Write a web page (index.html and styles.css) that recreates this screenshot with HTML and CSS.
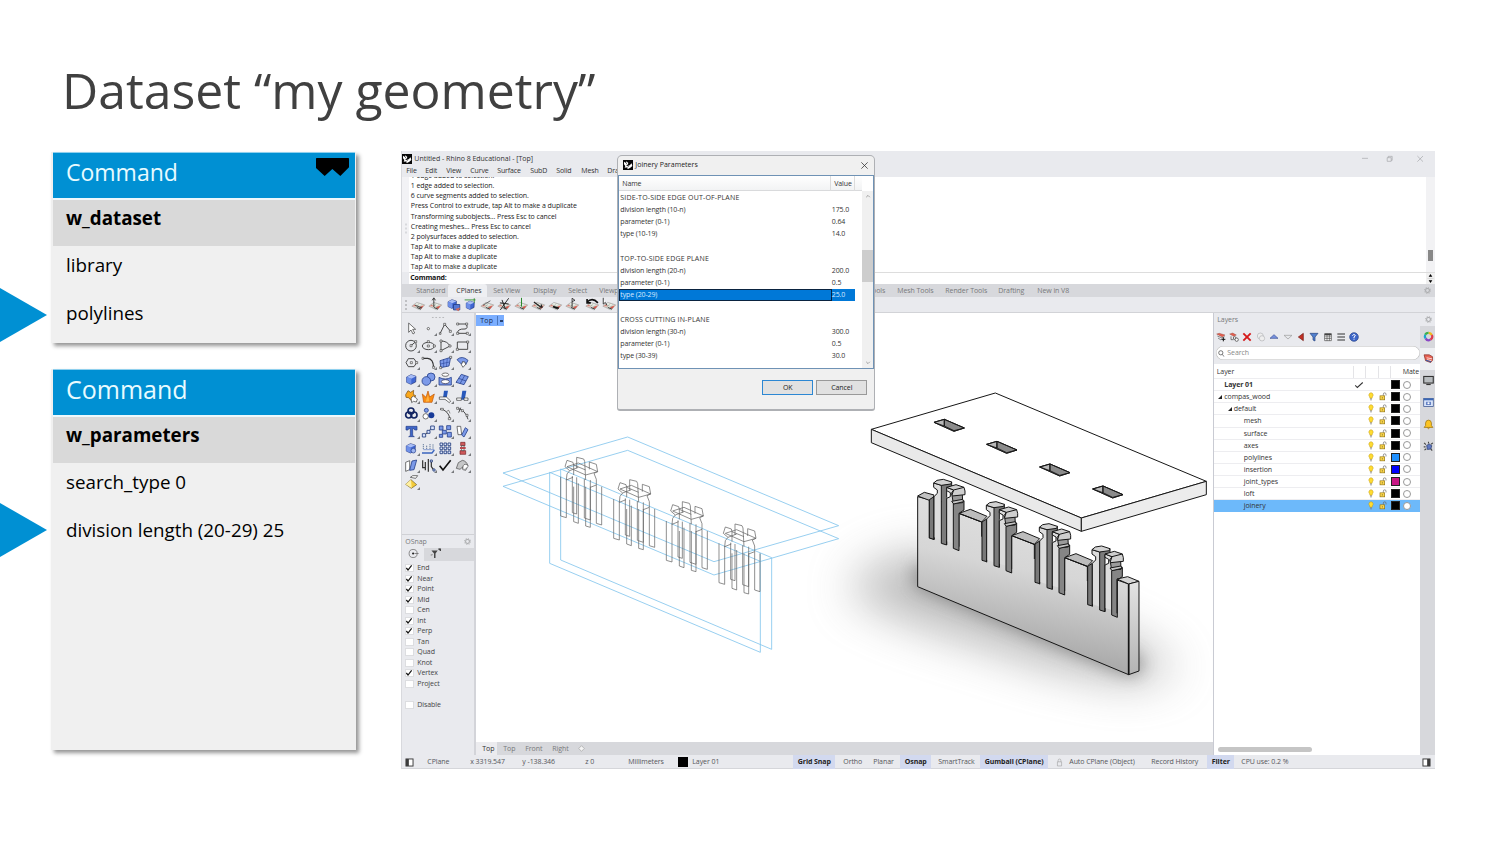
FILE: index.html
```html
<!DOCTYPE html>
<html lang="en">
<head>
<meta charset="utf-8">
<title>Dataset “my geometry”</title>
<link rel="stylesheet" href="styles.css">
</head>
<body>
<svg class="defs" width="0" height="0">
  <defs>
    <symbol id="logo" viewBox="0 0 30 30"><rect width="30" height="30" fill="#080808"/><path d="M3 5 9 9 10 4 16 9 14 14 9 15 13 18 20 16 26 10 28 18 22 23 15 27 10 22 5 24 7 18 3 13Z" fill="#fff"/><path d="M9 9l3 2M17 19l-4 3" stroke="#000" stroke-width="2"/></symbol>
    <symbol id="gear" viewBox="0 0 20 20"><circle cx="10" cy="10" r="5.5" fill="none" stroke="#aaabad" stroke-width="3"/><circle cx="10" cy="10" r="8" fill="none" stroke="#aaabad" stroke-width="3" stroke-dasharray="3 3.3"/></symbol>
    <symbol id="bulb" viewBox="0 0 18 26"><path d="M9 2a7 7 0 0 0-4 12l1 4h6l1-4A7 7 0 0 0 9 2Z" fill="#ffdc32" stroke="#c39a12" stroke-width="1.5"/><path d="M6 20h6M7 23h4" stroke="#777" stroke-width="2"/></symbol>
    <symbol id="lock" viewBox="0 0 24 26"><path d="M13 11V6a4 4 0 0 1 8 0v4" fill="none" stroke="#666" stroke-width="2"/><rect x="3" y="11" width="14" height="12" fill="#ffd84a" stroke="#8f7213" stroke-width="2"/><path d="M10 15v4" stroke="#553" stroke-width="2"/></symbol>
    <symbol id="tick" viewBox="0 0 24 24"><path d="M4 12l5 6L20 4" fill="none" stroke="#151515" stroke-width="3.6"/></symbol>
    <symbol id="plane" viewBox="0 0 36 36"><path d="M2 22 14 13l19 6-11 12Z" fill="#e9ece6" stroke="#9b9b98" stroke-width="1.5"/><path d="M8 18l19 7M20 15 11 26M27 17 17 29" stroke="#8b9a88" stroke-width="1"/><path d="M19 25l12-6-6 9Z" fill="#d4574c"/><path d="M3 22l11 1-5-5Z" fill="#d98378"/><path d="M14 25l10 4" stroke="#222" stroke-width="2"/></symbol>
    <symbol id="cube" viewBox="0 0 36 36"><path d="M4 11 17 4l15 5-1 17-14 7L4 27Z" fill="#3f66d2" stroke="#1d2f73" stroke-width="2"/><path d="M4 11 17 4l15 5-14 7Z" fill="#a9bdf5"/><path d="M18 16v17L4 27V11Z" fill="#6f90e8"/></symbol>
    <symbol id="side" viewBox="0 0 28 28"><rect x="3" y="3" width="22" height="22" fill="#fff" stroke="#3c3c3c" stroke-width="3"/><path d="M3 3h9v22H3z" fill="#3c3c3c"/></symbol>
  </defs>
</svg>

<main class="slide">
  <h1 class="title">Dataset “my geometry”</h1>
  <div class="columns">
    <div class="cards">
      <section class="card">
        <header class="card-head"><span class="cmd-a">Command</span>
          <svg class="wood" viewBox="0 0 99 54"><path d="M2 0H97Q99 0 99 2V28L73 54 49 33 26 54 0 30V2Q0 0 2 0Z"/></svg>
        </header>
        <div class="card-name"><span>w_dataset</span></div>
        <div class="card-row">library</div>
        <div class="card-row pointed">polylines</div>
      </section>
      <section class="card tall">
        <header class="card-head"><span class="cmd-b">Command</span></header>
        <div class="card-name"><span>w_parameters</span></div>
        <div class="card-row">search_type 0</div>
        <div class="card-row pointed">division length (20-29) 25</div>
      </section>
    </div>

    <div class="app">
      <header class="app-top">
        <div class="app-title"><svg><use href="#logo"/></svg><span>Untitled - Rhino 8 Educational - [Top]</span>
          <svg class="winbtns" viewBox="0 0 190 30"><path d="M3 13h18M79 11h12v11H79zM82 11V7h12v12h-3M170 6l17 17M187 6l-17 17" fill="none" stroke="#9c9da0" stroke-width="1.8"/></svg>
        </div>
        <nav class="menu"><span>File</span><span>Edit</span><span>View</span><span>Curve</span><span>Surface</span><span>SubD</span><span>Solid</span><span>Mesh</span><span>Dra</span></nav>
      </header>
      <section class="history">
        <i class="grip-v"></i>
        <div class="log">
          <p>1 edge added to selection.</p><p>1 edge added to selection.</p><p>6 curve segments added to selection.</p><p>Press Control to extrude, tap Alt to make a duplicate</p><p>Transforming subobjects... Press Esc to cancel</p><p>Creating meshes... Press Esc to cancel</p><p>2 polysurfaces added to selection.</p><p>Tap Alt to make a duplicate</p><p>Tap Alt to make a duplicate</p><p>Tap Alt to make a duplicate</p>
        </div>
        <div class="log-scroll"><i></i></div>
      </section>
      <div class="prompt"><b>Command:</b><svg viewBox="0 0 24 36"><path d="M12 3 18 12H6ZM12 33 18 24H6Z"/><path d="M2 18h20" stroke="#aaa"/></svg></div>
      <nav class="tabs"><i></i><span>Standard</span><span class="on">CPlanes</span><span>Set View</span><span>Display</span><span>Select</span><span>Viewport</span><span>Tools</span><span>Mesh Tools</span><span>Render Tools</span><span>Drafting</span><span>New in V8</span><svg><use href="#gear"/></svg></nav>
      <div class="toolbar">
        <i class="grip-v"></i>
        <svg viewBox="0 0 36 36"><use href="#plane"/><path d="M10 20l16 6" stroke="#333" stroke-width="2"/></svg>
        <svg viewBox="0 0 36 36"><use href="#plane"/><path d="M14 24V3M10 8l4-6 4 6" stroke="#222" stroke-width="2" fill="none"/></svg>
        <svg viewBox="0 0 36 36"><use href="#cube" x="2" y="3" width="26" height="27"/><path d="M18 18h15v13H18z" fill="#5577d4" stroke="#233d88" stroke-width="2"/><path d="M22 29l12-4-4 9Z" fill="#cf6a5c"/></svg>
        <svg viewBox="0 0 36 36"><use href="#cube" x="5" y="7" width="25" height="25"/><path d="M4 7h26M27 3v11" stroke="#282" stroke-width="2"/></svg>
        <svg viewBox="0 0 36 36"><use href="#plane"/><path d="M7 20 25 9" stroke="#555" stroke-width="2"/></svg>
        <svg viewBox="0 0 36 36"><use href="#plane"/><path d="M8 31 28 3M12 7l8 22M7 14l21 3" stroke="#222" stroke-width="2.3"/></svg>
        <svg viewBox="0 0 36 36"><use href="#plane"/><path d="M18 23V2" stroke="#2a8a2d" stroke-width="2.5"/></svg>
        <svg viewBox="0 0 36 36"><use href="#plane"/><path d="M7 12l18 13M24 18l3 8" stroke="#222" stroke-width="3"/></svg>
        <svg viewBox="0 0 36 36"><use href="#plane"/><path d="M12 23l14 4" stroke="#111" stroke-width="4"/></svg>
        <svg viewBox="0 0 36 36"><use href="#plane"/><path d="M17 25V3l7 5-7 3" stroke="#222" stroke-width="2" fill="none"/></svg>
        <svg class="wide" viewBox="0 0 36 36"><use href="#plane"/><path d="M5 12Q18 0 31 14M5 5v9h9" stroke="#111" stroke-width="4" fill="none"/></svg>
        <svg viewBox="0 0 36 36"><use href="#plane"/><path d="M3 2v15l5-4 4 7" stroke="#222" stroke-width="2" fill="#fff"/></svg>
      </div>

      <div class="work">
        <aside class="side">
          <div class="palette">
            <i class="grip-h"></i>
            <div class="tools">
              <b><svg viewBox="0 0 51 51"><path d="M17 9v28l7-7 6 12 5-3-6-11h9Z" fill="#fff" stroke="#333" stroke-width="2"/></svg></b>
              <b><svg viewBox="0 0 51 51"><circle cx="25" cy="26" r="3.5" fill="#fff" stroke="#333" stroke-width="2"/></svg></b>
              <b><svg viewBox="0 0 51 51"><path d="M9 41 23 13l17 20" class="ln"/><path d="M7 38h5v5H7zM20 10h6v6h-6zM37 31h6v6h-6z" class="nd"/></svg></b>
              <b><svg viewBox="0 0 51 51"><path d="M11 12h26Q43 26 33 27 9 26 11 40h28" class="ln"/><path d="M8 9h6v6H8zM35 9h6v6h-6zM8 37h6v6H8zM37 37h6v6h-6z" class="nd"/></svg></b>
              <b><svg viewBox="0 0 51 51"><circle cx="24" cy="26" r="16" class="ln"/><path d="M24 26 37 15" class="ln"/><path d="M21 23h6v6h-6zM35 11h6v6h-6z" class="nd"/></svg></b>
              <b><svg viewBox="0 0 51 51"><ellipse cx="25" cy="27" rx="18" ry="11" class="ln"/><path d="M22 24h6v6h-6zM22 11h6v6h-6zM40 24h6v6h-6z" class="nd"/></svg></b>
              <b><svg viewBox="0 0 51 51"><path d="M12 12v30M12 12Q31 12 39 27L12 41" class="ln"/><path d="M9 9h6v6H9zM36 24h6v6h-6zM9 38h6v6H9z" class="nd"/></svg></b>
              <b><svg viewBox="0 0 51 51"><path d="M10 15h31v22H10Z" class="ln"/><path d="M7 34h6v6H7zM38 12h6v6h-6z" class="nd"/></svg></b>
              <b><svg viewBox="0 0 51 51"><path d="M9 26 16 14h17l8 12-8 12H16Z" class="ln"/><path d="M22 23h6v6h-6zM38 23h6v6h-6z" class="nd"/></svg></b>
              <b><svg viewBox="0 0 51 51"><path d="M8 13h15Q40 14 41 41" class="ln thick"/><path d="M6 10h5v6H6zM38 37h6v6h-6z" class="nd"/></svg></b>
              <b><svg viewBox="0 0 51 51"><path d="M9 20 41 10 36 36 11 41Z" class="bl"/><path d="M20 15v24M31 14l-3 24M10 30l28-6" stroke="#203b91" stroke-width="1.5"/><path d="M38 7h6v6h-6zM8 38h6v6H8z" class="nd"/></svg></b>
              <b><svg viewBox="0 0 51 51"><path d="M9 17Q24 3 42 19L35 32Q34 22 26 23L24 32Z" class="bl"/><path d="M26 23Q34 21 35 31l-8 9-5-8Z" fill="#fff" stroke="#333" stroke-width="2"/></svg></b>
              <b><svg viewBox="0 0 51 51"><use href="#cube" x="7" y="7" width="36" height="36"/></svg></b>
              <b><svg viewBox="0 0 51 51"><circle cx="33" cy="18" r="12" class="bl"/><circle cx="19" cy="30" r="13" class="bl"/></svg></b>
              <b><svg viewBox="0 0 51 51"><ellipse cx="25" cy="11" rx="10" ry="5" fill="#fff" stroke="#333" stroke-width="2"/><path d="M6 19v23h37V19Q25 29 6 19Z" class="bl"/><ellipse cx="25" cy="32" rx="12" ry="6" fill="#fff" stroke="#224" stroke-width="2"/></svg></b>
              <b><svg viewBox="0 0 51 51"><path d="M6 34 22 10l21 7-13 24Z" class="bl"/><path d="M14 22l22 8M32 14 18 38" stroke="#233d88" stroke-width="2"/></svg></b>
              <b><svg viewBox="0 0 51 51"><path d="M8 20 15 8l8 5 9-6-1 12 8 5-10 5-5 8-7-8-8-1Z" fill="#fba81c" stroke="#704713" stroke-width="2"/><path d="M24 30l7-6 12 9-3 9-9-2-5 4Z" fill="#fff" stroke="#333" stroke-width="2"/></svg></b>
              <b><svg viewBox="0 0 51 51"><path d="M11 43 7 18l11 10L24 9l5 18 14-9-7 25Z" fill="#f98d13" stroke="#bd5308" stroke-width="2"/><path d="M17 41 24 20l4 20Z" fill="#ffb341"/></svg></b>
              <b><svg viewBox="0 0 51 51"><path d="M21 8h12l-4 22H18Z" fill="#2858bb"/><path d="M7 27h21l13 12-4 5-13-10H7Z" fill="#fff" stroke="#333" stroke-width="2"/></svg></b>
              <b><svg viewBox="0 0 51 51"><path d="M25 8h12l-5 27H21Z" fill="#2858bb"/><path d="M8 30h14v7H8zM30 30h12v7H30z" fill="#fff" stroke="#333" stroke-width="2"/></svg></b>
              <b><svg viewBox="0 0 51 51"><g fill="none" stroke="#132563" stroke-width="5"><circle cx="24" cy="18" r="9"/><circle cx="17" cy="30" r="9"/><circle cx="33" cy="30" r="9"/></g></svg></b>
              <b><svg viewBox="0 0 51 51"><circle cx="19" cy="16" r="6" class="bl"/><circle cx="17" cy="34" r="8" fill="#fff" stroke="#333" stroke-width="2"/><circle cx="34" cy="31" r="9" fill="#173a98"/></svg></b>
              <b><svg viewBox="0 0 51 51"><path d="M9 12Q34 15 39 42" class="ln"/><path d="M11 10h8v5h-8zM28 20l7-4 4 9M34 38h7v6h-7z" class="nd"/></svg></b>
              <b><svg viewBox="0 0 51 51"><path d="M8 9Q35 15 42 43M20 8l-6 15" class="ln"/><path d="M8 7h6v6H8zM22 14h6v6h-6zM36 28h6v6h-6z" class="nd"/></svg></b>
              <b><svg viewBox="0 0 51 51"><path d="M9 10h33v11h-7l-2-4h-4v21l5 3H17l5-3V17h-5l-2 4H9Z" fill="#3f66c8" stroke="#233d88" stroke-width="2"/></svg></b>
              <b><svg viewBox="0 0 51 51"><path d="M13 38 36 14" class="ln"/><path d="M7 32h10v10H7zM32 9h11v11H32zM21 22h9v9h-9z" class="nb"/></svg></b>
              <b><svg viewBox="0 0 51 51"><path d="M7 9h11v12H7zM29 8h12v12H29zM16 22h12v11H16zM31 28h12v14H31zM7 34h10v9H7z" class="bl"/></svg></b>
              <b><svg viewBox="0 0 51 51"><path d="M9 10h11l3 25H12Z" fill="#fff" stroke="#333" stroke-width="2"/><path d="M23 36 34 14l8 6-12 22Z" class="bl"/></svg></b>
              <b><svg viewBox="0 0 51 51"><use href="#cube" x="6" y="7" width="35" height="35"/><circle cx="31" cy="32" r="7" fill="#9fb6f1" stroke="#233d88" stroke-width="2"/></svg></b>
              <b><svg viewBox="0 0 51 51"><path d="M6 39h30l7-9" fill="none" stroke="#3b66bf" stroke-width="4"/><path d="M10 27V12M20 27V15M30 27V12M39 26V12" stroke="#667c9d" stroke-width="3" stroke-dasharray="4 2"/><path d="M10 29h33" stroke="#5c79c4" stroke-width="2"/></svg></b>
              <b><svg viewBox="0 0 51 51"><path d="M9 9h8v8H9zM21 9h8v8h-8zM33 9h8v8h-8zM9 21h8v8H9zM21 21h8v8h-8zM33 21h8v8h-8zM9 33h8v8H9zM21 33h8v8h-8zM33 33h8v8h-8z" class="nb"/></svg></b>
              <b><svg viewBox="0 0 51 51"><path d="M20 7h13v10H20zM18 32h17v11H18z" fill="#cf595b" stroke="#772325" stroke-width="2"/><path d="M23 17h7v15h-7z" fill="#fff" stroke="#333" stroke-width="2"/><path d="M18 21h17v6H18z" fill="#b9494d"/></svg></b>
              <b><svg viewBox="0 0 51 51"><path d="M8 16 20 11v27L8 43Z" fill="#fff" stroke="#333" stroke-width="2"/><path d="M20 40 27 12l14-3-8 29Z" class="bl"/></svg></b>
              <b><svg viewBox="0 0 51 51"><path d="M8 10v22h9M25 6v38M16 15v25M34 12v17l8 11" class="ln thick"/><path d="M31 9h6v6h-6zM39 36h6v6h-6z" class="nb"/></svg></b>
              <b><svg viewBox="0 0 51 51"><path d="M8 26l10 13L41 10" fill="none" stroke="#111" stroke-width="5"/></svg></b>
              <b><svg viewBox="0 0 51 51"><path d="M7 34 13 17 25 10Q38 12 42 27L35 40 27 38 26 30 18 37Z" fill="#c6c7c8" stroke="#444" stroke-width="2"/><path d="M27 38Q25 22 34 22T42 28" fill="#fff" stroke="#444" stroke-width="2"/></svg></b>
              <b><svg viewBox="0 0 51 51"><path d="M8 31 24 17l17 15-16 11Z" fill="#f4cb3a" stroke="#6d5c23" stroke-width="2"/><path d="M24 17l2 25-18-11Z" fill="#fff0a1"/><path d="M22 10 29 5h15l-6 8Z" fill="#fff" stroke="#333" stroke-width="2"/></svg></b>
            </div>
          </div>
          <div class="osnap">
            <div class="panel-head"><span>OSnap</span><svg><use href="#gear"/></svg></div>
            <div class="osnap-tabs">
              <span><svg viewBox="0 0 30 30"><circle cx="14" cy="15" r="11" fill="none" stroke="#666" stroke-width="2"/><circle cx="14" cy="15" r="3" fill="#222"/><path d="M18 15h11" stroke="#666" stroke-width="2"/></svg></span>
              <span><svg viewBox="0 0 30 30"><path d="M4 7h17l-6 8v12h-4V15Z" fill="#444"/><path d="M23 3h5v5" fill="none" stroke="#222" stroke-width="3"/><path d="M2 20l5-2" stroke="#888" stroke-width="3"/></svg></span>
            </div>
            <ul class="checks">
              <li><i><svg><use href="#tick"/></svg></i>End</li><li><i><svg><use href="#tick"/></svg></i>Near</li><li><i><svg><use href="#tick"/></svg></i>Point</li><li><i><svg><use href="#tick"/></svg></i>Mid</li><li><i></i>Cen</li><li><i><svg><use href="#tick"/></svg></i>Int</li><li><i><svg><use href="#tick"/></svg></i>Perp</li><li><i></i>Tan</li><li><i></i>Quad</li><li><i></i>Knot</li><li><i><svg><use href="#tick"/></svg></i>Vertex</li><li><i></i>Project</li><li class="last"><i></i>Disable</li>
            </ul>
          </div>
        </aside>

        <section class="view">
          <div class="stage">
            <svg class="scene" viewBox="475 313 737 428">
              <defs>
                <linearGradient id="front" gradientUnits="userSpaceOnUse" x1="520" y1="420" x2="440" y2="790"><stop offset="0" stop-color="#dedede"/><stop offset=".4" stop-color="#d6d6d6"/><stop offset="1" stop-color="#ababab"/></linearGradient>
                <linearGradient id="end" x1="0" y1="0" x2="0" y2="1"><stop offset="0" stop-color="#e4e4e4"/><stop offset="1" stop-color="#b2b2b2"/></linearGradient>
                <filter id="soft" x="-50%" y="-50%" width="200%" height="200%"><feGaussianBlur stdDeviation="70"/></filter>
                <filter id="mid" x="-50%" y="-50%" width="200%" height="200%"><feGaussianBlur stdDeviation="26"/></filter>
                <g id="wire"><path d="M209 170V288L226 293V178M244 168V278L257 282V172M248 200V305L262 310V190M280 176V294L298 300V180M284 200V318L298 322V200M316 195V310L332 315V200M222 140 228 121 246 127 248 135V165M222 140 236 152 228 162 226 180 246 172M257 145V112L278 117 281 124 284 180M295 148V126L316 133 320 155 309 160 316 178V195L298 202M228 140 262 129 320 155 284 165ZM248 135 284 150M236 152 262 142"/></g>
                <g id="hole"><path d="M219 127 250 118 310 144 279 154Z" fill="#999"/><path d="M219 127 250 118V138Z" fill="#b9b9b9"/><path d="M250 118V138L279 152 310 144Z" fill="#8b8b8b"/><path d="M219 127 250 118 310 144 279 154ZM250 118V138" fill="none"/></g>
                <g id="joint">
                  <path d="M205 359 219 350V478L205 474Z" fill="#787878"/>
                  <path d="M219 345 229 340V330L218 322V309L241 316V480L219 472Z" fill="#dcdcdc" stroke="none"/>
                  <path d="M219 480V350L229 340V330L218 322V309L241 316" fill="none"/>
                  <path d="M241 316 272 306V320L257 325V495L241 490Z" fill="#7b7b7b"/>
                  <path d="M218 309 228 301 247 298 272 306 270 312 241 316Z" fill="#d2d2d2"/>
                  <path d="M257 322 278 330V490L257 484V352L268 350V338L257 332Z" fill="#dcdcdc" stroke="none"/>
                  <path d="M257 495V355L268 350V338L257 332V322L278 330" fill="none"/>
                  <path d="M277 372 309 362V390L294 400V512L277 505Z" fill="#858585"/>
                  <path d="M273 346 304 343 305 368 277 370Z" fill="#9b9b9b"/>
                  <path d="M272 364 305 358 308 365 278 372Z" fill="#c5c5c5"/>
                  <path d="M257 322 285 314 309 322 312 333V344L274 348 271 340 278 330Z" fill="#cfcfcf"/>
                  <path d="M278 330 309 322M273 345 278 330" fill="none"/>
                </g>
                <g id="block"><path d="M294 400 328 388 378 409 362 426Z" fill="#bcbcbc"/><path d="M294 500V400L362 426V470" fill="none"/></g>
              </defs>
              <g transform="translate(490 420) scale(.33333)" fill="none">
                <g stroke="#83c5ed" stroke-width="2.5"><path d="M36 159 410 51 1043 317 669 425ZM36 199 410 91 1043 356 669 465ZM176 157 808 424V697L176 430ZM209 147 842 413V688L209 420ZM808 400V424"/></g>
                <g stroke="#666" stroke-width="2.2"><use href="#wire"/><use href="#wire" x="159" y="67"/><use href="#wire" x="317" y="133"/><use href="#wire" x="475" y="200"/></g>
              </g>
              <g transform="translate(860 380) scale(.33333)" stroke="#151515" stroke-width="3" stroke-linejoin="round">
                <path d="M20 560 190 510 820 780 960 870 800 910 560 860 130 720 -40 640Z" fill="#777" opacity=".5" stroke="none" filter="url(#soft)"/>
                <path d="M160 550 820 820 850 850 830 885 790 882 160 618Z" fill="#555" opacity=".55" stroke="none" filter="url(#mid)"/>
                <path d="M170 350 205 359V474L219 478V350L294 400 362 426 453 466 520 493 612 533 680 560 768 600 803 612V884L170 620Z" fill="url(#front)"/>
                <path d="M170 348 190 337 219 345 217 354 205 361Z" fill="#c2c2c2"/>
                <use href="#block"/><use href="#block" x="158" y="67"/><use href="#block" x="317" y="133"/>
                <use href="#joint"/><use href="#joint" x="158" y="67"/><use href="#joint" x="317" y="133"/><use href="#joint" x="475" y="200"/>
                <path d="M768 700V597" fill="none"/>
                <path d="M768 597 800 590 834 604 803 612Z" fill="#d5d5d5"/>
                <path d="M803 612 834 604V873L803 884Z" fill="url(#end)"/>
                <path d="M803 612V884" stroke-width="5"/>
                <path d="M31 148 403 39 1036 304 661 414Z" fill="#fff"/>
                <path d="M31 148 661 414V454L31 188Z" fill="#e9e9e9"/>
                <path d="M661 414 1036 304V344L661 454Z" fill="#ececec"/>
                <g stroke-width="2.5"><use href="#hole"/><use href="#hole" x="158" y="66"/><use href="#hole" x="317" y="134"/><use href="#hole" x="476" y="200"/></g>
              </g>
            </svg>
            <div class="view-label"><span>Top</span><i></i></div>
          </div>
          <nav class="view-tabs"><span class="on">Top</span><span>Top</span><span>Front</span><span>Right</span><svg viewBox="0 0 20 20"><path d="M10 2 18 10 10 18 2 10Z" fill="#f5f5f5" stroke="#a5a5a5" stroke-width="2"/></svg></nav>
        </section>

        <section class="layers">
          <div class="panel-head"><span>Layers</span><svg><use href="#gear"/></svg></div>
          <div class="layers-body">
            <div class="layers-main">
              <div class="layer-tools">
                <svg viewBox="0 0 30 30"><path d="M2 6l8-2 17 5-8 6Z" fill="#e5604f" stroke="#792d25"/><path d="M4 12l14 6 8-4M6 18l9 6" stroke="#555" stroke-width="2" fill="none"/><path d="M22 16v12M16 22h12" stroke="#111" stroke-width="3"/></svg>
                <svg viewBox="0 0 30 30"><path d="M2 6l9-3 11 6-8 4Z" fill="#e5604f" stroke="#792d25"/><path d="M6 13v10h8" stroke="#444" stroke-width="2" fill="none"/><circle cx="17" cy="18" r="4" class="ring"/><circle cx="23" cy="23" r="5" class="ring"/></svg>
                <svg viewBox="0 0 30 30"><path d="M4 4l22 22M26 4 4 26" stroke="#d51919" stroke-width="5.5"/></svg>
                <svg viewBox="0 0 30 30"><g fill="#eee" stroke="#b2b4b6" stroke-width="2"><circle cx="13" cy="12" r="9"/><circle cx="18" cy="19" r="8"/></g></svg>
                <svg viewBox="0 0 30 30"><path d="M3 19 15 8l12 11Z" fill="#7893df" stroke="#3a4e95" stroke-width="2"/></svg>
                <svg viewBox="0 0 30 30"><path d="M3 10 15 21 27 10Z" fill="#e6e8eb" stroke="#999" stroke-width="2"/></svg>
                <svg viewBox="0 0 30 30"><path d="M22 4v22L7 15Z" fill="#c33125" stroke="#6c1914" stroke-width="2"/></svg>
                <svg viewBox="0 0 30 30"><path d="M3 4h24l-9 11v12l-6-3v-9Z" fill="#5180ce" stroke="#23417e" stroke-width="2"/></svg>
                <svg viewBox="0 0 30 30"><path d="M5 5h20v21H5zM5 12h20M5 19h20M12 5v21M19 5v21" fill="#fff" stroke="#444" stroke-width="2"/><path d="M5 5h20v4H5z" fill="#444"/></svg>
                <svg viewBox="0 0 30 30"><path d="M4 6h23M4 15h23M4 24h23" stroke="#333" stroke-width="3.5"/></svg>
                <svg viewBox="0 0 30 30"><circle cx="15" cy="15" r="13" fill="#3e67c9" stroke="#223f83" stroke-width="2"/><path d="M10 11q5-7 9-1 0 3-4 5v3m0 2v3" fill="none" stroke="#fff" stroke-width="3"/></svg>
              </div>
              <div class="search"><svg viewBox="0 0 20 20"><circle cx="8" cy="8" r="6" fill="none" stroke="#444" stroke-width="2"/><path d="M12 13l6 6" stroke="#444" stroke-width="2"/></svg>Search</div>
              <div class="lr head"><span>Layer</span><i></i><i></i><i></i><i></i><span class="mat">Mate</span></div>
              <div class="rows">
                <div class="lr"><span class="n0">Layer 01</span><svg class="ck" viewBox="0 0 24 24"><path d="M3 13l5 5L21 6" fill="none" stroke="#333" stroke-width="2.5"/></svg><i></i><i></i><em></em><u></u></div>
                <div class="lr"><span class="n1">compas_wood</span><i></i><svg><use href="#bulb"/></svg><svg><use href="#lock"/></svg><em></em><u></u></div>
                <div class="lr"><span class="n2">default</span><i></i><svg><use href="#bulb"/></svg><svg><use href="#lock"/></svg><em></em><u></u></div>
                <div class="lr"><span class="n3">mesh</span><i></i><svg><use href="#bulb"/></svg><svg><use href="#lock"/></svg><em></em><u></u></div>
                <div class="lr"><span class="n3">surface</span><i></i><svg><use href="#bulb"/></svg><svg><use href="#lock"/></svg><em></em><u></u></div>
                <div class="lr"><span class="n3">axes</span><i></i><svg><use href="#bulb"/></svg><svg><use href="#lock"/></svg><em></em><u></u></div>
                <div class="lr"><span class="n3">polylines</span><i></i><svg><use href="#bulb"/></svg><svg><use href="#lock"/></svg><em class="sky"></em><u></u></div>
                <div class="lr"><span class="n3">insertion</span><i></i><svg><use href="#bulb"/></svg><svg><use href="#lock"/></svg><em class="blue"></em><u></u></div>
                <div class="lr"><span class="n3">joint_types</span><i></i><svg><use href="#bulb"/></svg><svg><use href="#lock"/></svg><em class="pink"></em><u></u></div>
                <div class="lr"><span class="n3">loft</span><i></i><svg><use href="#bulb"/></svg><svg><use href="#lock"/></svg><em></em><u></u></div>
                <div class="lr sel"><span class="n3">joinery</span><i></i><svg><use href="#bulb"/></svg><svg><use href="#lock"/></svg><em></em><u></u></div>
              </div>
              <i class="hscroll"></i>
            </div>
            <div class="strip">
              <span><svg viewBox="0 0 30 30"><g fill="none" stroke-width="6"><path d="M15 5a10 10 0 0 1 9 6" stroke="#f0b91c"/><path d="M24 11a10 10 0 0 1-4 13" stroke="#e03c4e"/><path d="M20 24a10 10 0 0 1-13-4" stroke="#8a46c4"/><path d="M7 20a10 10 0 0 1-1-10" stroke="#1ca5cd"/><path d="M6 10a10 10 0 0 1 9-5" stroke="#3bb14b"/></g></svg></span>
              <span class="on"><svg viewBox="0 0 30 30"><path d="M3 5h14l9 5v10l-5 6-14-5Z" fill="#e96254" stroke="#863229" stroke-width="2"/><path d="M10 13l15 3M11 18l12 3" stroke="#fff" stroke-width="2"/><path d="M8 20l14 4" stroke="#3859a7" stroke-width="3"/></svg></span>
              <span><svg viewBox="0 0 30 30"><rect x="2" y="4" width="26" height="18" fill="#b9bdc0" stroke="#333" stroke-width="3"/><path d="M9 26h12" stroke="#333" stroke-width="3"/></svg></span>
              <span><svg viewBox="0 0 30 30"><rect x="2" y="4" width="26" height="22" fill="#dce7fb" stroke="#35518e" stroke-width="2"/><path d="M2 4h26v5H2z" fill="#3967b6"/><path d="M8 13h14v9H8z" fill="#6582c4"/><circle cx="15" cy="17" r="3" fill="#fff"/></svg></span>
              <span><svg viewBox="0 0 30 30"><path d="M3 23 7 18V11Q8 3 15 3t8 8v7l4 5ZM12 24q3 5 6 0" fill="#fcc422" stroke="#9b7314" stroke-width="2"/></svg></span>
              <span><svg viewBox="0 0 30 30"><path d="M3 5l5 5M27 5l-5 4M2 16h5M4 25l5-4M15 2v5M25 26l-4-5" stroke="#444" stroke-width="3"/><path d="M10 12 17 8l7 5-3 9-9 1Z" fill="#6078c2" stroke="#27396c" stroke-width="2"/></svg></span>
            </div>
          </div>
        </section>
      </div>

      <footer class="status"><svg><use href="#side"/></svg><span>CPlane</span><span>x 3319.547</span><span>y -138.346</span><span>z 0</span><span>Millimeters</span><i class="sw"></i><span>Layer 01</span><b>Grid Snap</b><span>Ortho</span><span>Planar</span><b>Osnap</b><span>SmartTrack</span><b>Gumball (CPlane)</b><svg class="pad" viewBox="0 0 20 26"><path d="M6 11V7a4 4 0 0 1 8 0v4M4 11h12v12H4z" fill="none" stroke="#999" stroke-width="1.6"/></svg><span>Auto CPlane (Object)</span><span>Record History</span><b>Filter</b><span>CPU use: 0.2 %</span><svg class="flip"><use href="#side"/></svg></footer>

      <div class="dialog">
        <header class="dlg-head"><svg><use href="#logo"/></svg><span>Joinery Parameters</span><svg class="x" viewBox="0 0 20 20"><path d="M1 1l18 18M19 1 1 19" stroke="#333" stroke-width="2.2"/></svg></header>
        <div class="dlg-body">
          <div class="dlg-table">
            <div class="pr th"><span>Name</span><span>Value</span></div>
            <div class="pr"><span class="caps">SIDE-TO-SIDE EDGE OUT-OF-PLANE</span></div>
            <div class="pr"><span>division length (10-n)</span><span>175.0</span></div>
            <div class="pr"><span>parameter (0-1)</span><span>0.64</span></div>
            <div class="pr"><span>type (10-19)</span><span>14.0</span></div>
            <div class="pr"></div>
            <div class="pr"><span class="caps">TOP-TO-SIDE EDGE PLANE</span></div>
            <div class="pr"><span>division length (20-n)</span><span>200.0</span></div>
            <div class="pr"><span>parameter (0-1)</span><span>0.5</span></div>
            <div class="pr hit"><span>type (20-29)</span><span>25.0</span></div>
            <div class="pr"></div>
            <div class="pr"><span class="caps">CROSS CUTTING IN-PLANE</span></div>
            <div class="pr"><span>division length (30-n)</span><span>300.0</span></div>
            <div class="pr"><span>parameter (0-1)</span><span>0.5</span></div>
            <div class="pr"><span>type (30-39)</span><span>30.0</span></div>
          </div>
          <div class="dlg-scroll"><svg viewBox="0 0 20 20"><path d="M4 14l6-6 6 6" fill="none" stroke="#888" stroke-width="2.5"/></svg><i></i><svg viewBox="0 0 20 20"><path d="M4 6l6 6 6-6" fill="none" stroke="#888" stroke-width="2.5"/></svg></div>
        </div>
        <div class="dlg-foot"><span class="btn ok">OK</span><span class="btn">Cancel</span></div>
      </div>
    </div>
  </div>
</main>
</body>
</html>
```
FILE: styles.css
```css
* { box-sizing: border-box; }
body { margin: 0; background: #fff; font-family: "Open Sans", "Noto Sans", sans-serif; overflow: hidden; }
.defs { display: block; height: 0; }
svg { display: block; flex: none; }
.slide { width: 1500px; height: 844px; padding-top: 57px; overflow: hidden; }
.title { margin: 0 0 0 62px; height: 94px; line-height: 66px; font-size: 49.9px; font-weight: 400; color: #404040; white-space: nowrap; }
.columns { display: flex; align-items: flex-start; gap: 45px; padding-left: 51px; }

/* command cards */
.cards { width: 305.3px; padding-top: 1px; display: flex; flex-direction: column; gap: 26px; }
.card { height: 191px; background: #f0f0f0; box-shadow: 3px 3px 4px rgba(0,0,0,.42); font-size: 18.8px; color: #000; }
.card.tall { height: 381px; }
.card-head { height: 46px; margin: 0 1.5px 2px 1.5px; padding: 0 6px 7px 13.5px; background: #0090d3; color: #e8fbff; display: flex; justify-content: space-between; align-items: center; box-shadow: 0 2px 0 #edf8fc, inset 0 1px 0 #8fd0ee; }
.cmd-a { font-size: 23px; }
.cmd-b { font-size: 25px; }
.wood { width: 33px; height: 18px; margin-top: -10px; }
.card-name { height: 46px; margin: 0 1.5px; padding-left: 13.5px; background: #d9d9d9; font-weight: 700; line-height: 36px; }
.card-row { position: relative; height: 48px; padding-left: 15px; line-height: 38px; }
.pointed::before { content: ""; position: absolute; left: -51px; top: -6px; border-left: 47px solid #0090d3; border-top: 27px solid transparent; border-bottom: 27px solid transparent; }
.tall .pointed::before { top: -8px; }

/* application window */
.app { position: relative; width: 1034px; height: 618px; background: #e9eaee; border-left: 1px solid #d8d9dd; color: #333; font-size: 7px; line-height: 10px; letter-spacing: -.08px; white-space: nowrap; display: flex; flex-direction: column; }
.app-top { height: 26px; flex: none; }
.app-title { height: 14px; display: flex; align-items: center; gap: 2px; padding-top: 1px; letter-spacing: -.02px; }
.app-title > svg:first-child { width: 10px; height: 10px; }
.app-title .winbtns { width: 63px; height: 10px; margin-left: auto; margin-right: 11px; }
.menu { display: grid; grid-template-columns: 19px 21px 24px 27px 33px 26px 25px 26px 14px; padding-left: 4px; line-height: 11px; letter-spacing: -.16px; }
.history { height: 95px; flex: none; background: #fff; display: flex; overflow: hidden; }
.grip-v { width: 7px; flex: none; align-self: stretch; background: #e9eaee radial-gradient(circle, #bfc0c3 .8px, transparent 1.1px) center / 4px 4px repeat-y; }
.log { flex: 1; margin-top: -6px; padding-left: 1.5px; }
.log p { margin: 0; height: 10.15px; line-height: 10.15px; color: #222; }
.log-scroll { width: 9px; background: #f2f2f4; padding: 73px 2px 0; }
.log-scroll i { display: block; width: 5px; height: 11px; background: #888; }
.history .grip-v { padding: 46px 0 37px; background-clip: content-box; background-color: transparent; box-shadow: inset 7px 0 0 rgba(233,234,238,.6); }
.prompt { height: 12px; margin-left: 7px; flex: none; background: #fff; border-top: 1px solid #ddd; padding-left: 1px; display: flex; justify-content: space-between; color: #111; letter-spacing: -.18px; }
.prompt svg { width: 9px; height: 11px; background: #f0f0f0; }
.tabs { height: 13px; flex: none; background: #d7d8dc; display: grid; grid-template-columns: 14px 32px 45px 40px 35px 31px 269px 29px 48px 53px 39px 387px 8px; align-items: center; color: #77787b; line-height: 13px; }
.tabs span { height: 13px; }
.tabs .on { background: #eeeff2; margin-right: 6px; padding-left: 8px; color: #333; border-radius: 3px 3px 0 0; }
.tabs svg { width: 7px; height: 7px; }
.toolbar { height: 16px; flex: none; display: flex; align-items: center; border-bottom: 1px solid #d2d3d7; gap: 2.1px; }
.toolbar .grip-v { height: 12px; align-self: center; }
.toolbar svg { width: 15px; height: 15px; }
.toolbar .wide { margin-left: 3px; }
.work { height: 442px; flex: none; display: grid; grid-template-columns: 74px 737px 222px; }

.side { border-right: 2px solid #d3d4d9; display: flex; flex-direction: column; }
.palette { height: 221px; padding-top: 3px; }
.grip-h { display: block; width: 14px; height: 3px; margin: 0 auto 1px; background: radial-gradient(circle, #b9babd .8px, transparent 1.1px) 0 0 / 3.5px 3px; }
.tools { display: grid; grid-template-columns: repeat(4, 17px); grid-auto-rows: 17.1px; padding-left: .5px; }
.tools b { position: relative; }
.tools b::after { content: ""; position: absolute; right: 0; bottom: 1px; border-left: 3px solid transparent; border-bottom: 3px solid #77797c; }
.tools b:nth-child(1)::after { display: none; }
.tools svg { width: 17px; height: 17px; }
.ln { fill: none; stroke: #333; stroke-width: 2.6; }
.thick { stroke-width: 3.6; }
.nd { fill: #fff; stroke: #333; stroke-width: 1.8; }
.nb { fill: #dce6ff; stroke: #25407f; stroke-width: 2.6; }
.bl { fill: #7c9ae9; stroke: #233d88; stroke-width: 2.4; }
.ring { fill: #fff; stroke: #333; stroke-width: 2; }
.panel-head { height: 13px; display: flex; justify-content: space-between; align-items: center; padding: 0 3px; color: #77787b; }
.panel-head svg { width: 7px; height: 7px; }
.osnap { border-top: 1px solid #d0d1d5; flex: 1; }
.osnap-tabs { height: 13px; background: #d7d8dc; display: flex; }
.osnap-tabs span { width: 22px; padding: 0 0 0 6px; }
.osnap-tabs span:first-child { background: #e9eaee; }
.osnap-tabs svg { width: 11px; height: 11px; }
.checks { list-style: none; margin: 0; padding: 2px 0 0 3px; }
.checks li { height: 10.5px; display: flex; align-items: center; gap: 3px; line-height: 10px; color: #444; }
.checks i { width: 9px; height: 8px; background: #fff; border: 1px solid #dcdde0; }
.checks i svg { width: 8px; height: 8px; margin: -1px; }
.checks .last { margin-top: 10.5px; }

.view { display: flex; flex-direction: column; }
.stage { position: relative; height: 429px; background: #fff; }
.scene { width: 737px; height: 428px; }
.view-label { position: absolute; left: 0; top: 2px; width: 28px; height: 11px; background: #7baeff; color: #1b2c4b; display: flex; line-height: 11px; padding-left: 4px; letter-spacing: .15px; }
.view-label i { margin: 1px 0 0 4px; width: 8px; height: 9px; border-left: 1px solid #4c77bc; background: linear-gradient(#2c4370, #2c4370) center / 3px 2px no-repeat; }
.view-tabs { height: 13px; background: #d7d8dc; display: grid; grid-template-columns: 27px 22px 27px 25px 8px; align-items: center; color: #77787b; line-height: 13px; }
.view-tabs .on { background: #ececef; margin-right: 6px; padding-left: 6px; color: #333; }
.view-tabs svg { width: 7px; height: 7px; margin-left: 1px; }

.layers { border-left: 1px solid #c9cbd3; display: flex; flex-direction: column; }
.layers-body { flex: 1; display: grid; grid-template-columns: 206px 15px; }
.layers-main { display: flex; flex-direction: column; background: linear-gradient(#e9eaee 38px, #fff 38px); }
.layer-tools { height: 20px; display: flex; gap: 3.35px; padding: 5.5px 0 0 1.5px; }
.layer-tools svg { width: 10px; height: 10px; }
.search { height: 14px; margin: 0 0 0 2px; background: #fff; border-radius: 7px; box-shadow: 0 0 0 .5px #bbb inset; color: #888; display: flex; gap: 2px; align-items: center; }
.search svg { width: 7px; height: 7px; margin-left: 2px; }
.lr { display: grid; grid-template-columns: 138.5px 12.5px 12.5px 12px 12px 18px; align-items: center; height: 12.13px; border-bottom: 1px solid #ededf0; line-height: 11px; color: #333; }
.lr.head { margin-top: 5px; height: 14px; padding-left: 2.5px; grid-template-columns: 136px 12.5px 12.5px 12px 13px 17px; background: #fff; }
.lr.head i { height: 12px; border-left: 1px solid #e4e4e7; }
.lr svg { width: 8px; height: 9px; margin-left: 1.5px; }
.lr .ck { width: 12px; height: 10px; margin-left: 0; }
.lr em { width: 9px; height: 9px; margin-left: 1px; background: #000; border: 1px solid #222; }
.lr .sky { background: #1e90ff; }
.lr .blue { background: #00f; }
.lr .pink { background: #c71585; }
.lr u { width: 8px; height: 8px; border: 1px solid #999; border-radius: 50%; background: #fff; margin-left: 1px; }
.n0 { padding-left: 10px; font-weight: 700; letter-spacing: -.1px; }
.n1 { padding-left: 4px; }
.n2 { padding-left: 13.5px; }
.n1::before, .n2::before { content: ""; display: inline-block; border-left: 4px solid transparent; border-bottom: 4px solid #222; margin-right: 2px; }
.n3 { padding-left: 29.5px; }
.lr.sel { background: #6db9fa; border-color: #6db9fa; }
.hscroll { display: block; width: 94px; height: 5px; border-radius: 3px; background: #c5c5c5; margin: auto 0 3px 4px; }
.strip { background: #d7d8dc; }
.strip span { height: 21.9px; display: flex; align-items: center; justify-content: flex-end; padding-right: 1.5px; }
.strip .on { background: #eeeff2; }
.strip svg { width: 11px; height: 11px; }

.status { height: 14px; flex: none; border-bottom: 1px solid #d5d6da; display: grid; grid-template-columns: 22px 43px 52px 63px 43px 50px 14px 101px 50px 30px 27px 38px 42px 76px 13px 82px 56px 34px 181px 10px; padding-left: 3px; line-height: 14px; color: #55565a; align-items: center; }
.status > svg { width: 9px; height: 9px; }
.status .pad { width: 7px; height: 9px; }
.status .flip { transform: scaleX(-1); }
.status .sw { width: 10px; height: 10px; background: #000; }
.status b { justify-self: start; padding: 0 4.5px; background: #d2d9ef; color: #222; letter-spacing: -.08px; }

/* parameter dialog over the window */
.dialog { position: absolute; left: 215px; top: 4px; width: 258px; height: 256px; background: #f0f0f0; border: 1px solid #aeb0b4; border-bottom-width: 2px; border-radius: 5px 5px 3px 3px; display: flex; flex-direction: column; }
.dlg-head { height: 19px; display: flex; align-items: center; gap: 2px; padding: 0 6px 1px 5px; color: #222; letter-spacing: .02px; }
.dlg-head svg { width: 10px; height: 10px; }
.dlg-head .x { width: 7px; height: 7px; margin-left: auto; }
.dlg-body { height: 194px; border: 1px solid #6f92b5; background: #fff; display: flex; justify-content: space-between; }
.dlg-table { width: 243px; }
.pr { height: 12.16px; display: grid; grid-template-columns: 211.5px 24.5px; line-height: 11.6px; padding-left: 1px; letter-spacing: -.12px; }
.th { height: 15px; line-height: 15px; border-bottom: 1px solid #d9dadc; padding-left: 3px; grid-template-columns: 208px 25px; background: linear-gradient(#fff, #f2f3f4); margin-bottom: 1px; }
.th span + span { border-left: 1px solid #dcdcdc; border-right: 1px solid #dcdcdc; padding-left: 3px; }
.caps { letter-spacing: .16px; }
.hit { color: #d6e9ff; padding-left: 0; grid-template-columns: 212.5px 23.5px; }
.hit span { background: #0078d7; }
.hit span:first-child { border: 1px solid #0a2340; line-height: 9.6px; }
.dlg-scroll { width: 11px; margin-top: 15px; background: #f0f0f0; display: flex; flex-direction: column; align-items: center; padding: 2px 0; }
.dlg-scroll svg { width: 6px; height: 6px; }
.dlg-scroll i { width: 11px; height: 32px; background: #cdcdcd; margin: 51px 0 auto; }
.dlg-foot { display: flex; justify-content: flex-end; gap: 3px; padding: 11px 7px 0 0; }
.btn { width: 51px; height: 15px; background: #e1e1e1; border: 1px solid #999; text-align: center; line-height: 13px; color: #222; }
.ok { border: 1.5px solid #2c87d3; }
```
